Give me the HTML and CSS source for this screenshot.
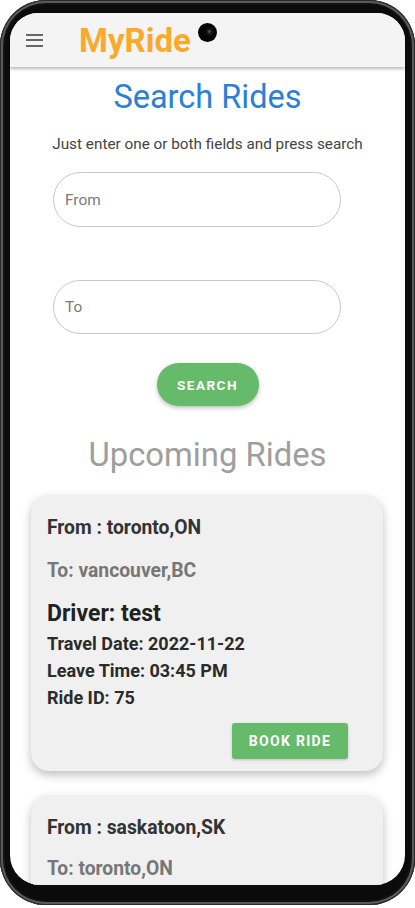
FILE: index.html
```html
<!DOCTYPE html>
<html>
<head>
<meta charset="utf-8">
<link rel="stylesheet" href="styles.css">
</head>
<body>
<div class="phone">
  <div class="screen">
    <header class="appbar">
      <span class="menu"><i></i><i></i><i></i></span>
      <span class="brand">MyRide</span>
    </header>
    <h1 class="title">Search Rides</h1>
    <p class="hint">Just enter one or both fields and press search</p>
    <div class="field from"><span class="ph">From</span></div>
    <div class="field to"><span class="ph">To</span></div>
    <button class="search">SEARCH</button>
    <h2 class="upcoming">Upcoming Rides</h2>
    <div class="card">
      <div class="l-from">From : toronto,ON</div>
      <div class="l-to">To: vancouver,BC</div>
      <div class="l-driver">Driver: test</div>
      <div class="l-info first">Travel Date: 2022-11-22</div>
      <div class="l-info">Leave Time: 03:45 PM</div>
      <div class="l-info">Ride ID: 75</div>
      <div class="actions"><button class="book">BOOK RIDE</button></div>
    </div>
    <div class="card second">
      <div class="l-from">From : saskatoon,SK</div>
      <div class="l-to">To: toronto,ON</div>
    </div>
  </div>
  <div class="camera"></div>
</div>
</body>
</html>
```
FILE: styles.css
```css
* { box-sizing: border-box; }
html, body { margin: 0; padding: 0; background: #fff; }
body { width: 415px; height: 908px; overflow: hidden; font-family: Roboto, "Noto Sans", sans-serif; }

.phone {
  position: relative;
  width: 415px;
  height: 905px;
  border-radius: 46px;
  background: #0b0b0b;
  box-shadow: inset 0 0 0 1px #2a2a2a, inset 0 0 0 3px #5a5a5a, inset 0 0 0 5px #111;
  padding: 13px 10px 0 10px;
}

.screen {
  height: 872px;
  border-radius: 28px 28px 30px 30px;
  background: #fff;
  overflow: hidden;
  display: flex;
  flex-direction: column;
}

.appbar {
  flex: none;
  height: 54px;
  background: #f4f4f4;
  box-shadow: 0 2px 3px rgba(0,0,0,0.28);
  display: flex;
  align-items: center;
  padding-left: 16px;
  position: relative;
  z-index: 1;
}
.menu { display: flex; flex-direction: column; gap: 3.5px; width: 17px; }
.menu i { display: block; height: 2px; background: #666; }
.brand {
  margin-left: 36px;
  font-size: 33px;
  line-height: 37px;
  font-weight: 700;
  color: #f9a92c;
}

.camera {
  position: absolute;
  z-index: 5;
  left: 198px;
  top: 23px;
  width: 19px;
  height: 19px;
  border-radius: 50%;
  background: radial-gradient(circle at 60% 45%, #6a5a7a 0, #1a1a24 2px, #050505 5px);
}

.title {
  margin: 11px 0 0;
  font-size: 32.5px;
  line-height: 38px;
  font-weight: 400;
  color: #2a80d6;
  text-align: center;
}
.hint {
  margin: 18px 0 0;
  font-size: 15.3px;
  line-height: 20px;
  color: #444;
  text-align: center;
}

.field {
  flex: none;
  margin-left: 43px;
  width: 288px;
  border: 1px solid #c8c8c8;
  border-radius: 28px;
  display: flex;
  align-items: center;
  padding-left: 11px;
}
.field.from { margin-top: 18px; height: 55px; }
.field.to { margin-top: 53px; height: 54px; }
.ph { font-size: 15.4px; color: #7a7a7a; }

.search {
  flex: none;
  align-self: center;
  margin-top: 29px;
  width: 102px;
  height: 43px;
  border: none;
  border-radius: 22px;
  background: #66bb6a;
  color: #fff;
  font-family: Roboto, sans-serif;
  font-weight: 700;
  font-size: 13.5px;
  letter-spacing: 1.5px;
  box-shadow: 0 2px 4px rgba(0,0,0,0.25);
  padding: 0;
}

.upcoming {
  margin: 30px 0 0;
  font-size: 32.8px;
  line-height: 38px;
  font-weight: 400;
  color: #9e9e9e;
  text-align: center;
}

.card {
  flex: none;
  margin: 21px 0 0 21px;
  width: 352px;
  height: 276px;
  background: #f0f0f0;
  border-radius: 18px;
  box-shadow: 0 4px 10px rgba(0,0,0,0.25);
  padding: 21px 16px 11px;
  display: flex;
  flex-direction: column;
}
.card.second { margin-top: 24px; height: 120px; }
.card.second .l-to { margin-top: 17px; }

.l-from { font-size: 19.3px; line-height: 24px; font-weight: 700; color: #333; }
.l-to { margin-top: 19px; font-size: 19.3px; line-height: 24px; font-weight: 700; color: #777; }
.l-driver { margin-top: 17px; font-size: 23px; line-height: 28px; font-weight: 700; color: #222; }
.l-info { margin-top: 3px; font-size: 18px; line-height: 24px; font-weight: 700; color: #2b2b2b; }
.l-info.first { margin-top: 4px; }

.actions { margin-top: 13px; display: flex; justify-content: flex-end; padding-right: 19px; }
.book {
  width: 116px;
  height: 36px;
  border: none;
  border-radius: 3px;
  background: #66bb6a;
  color: #fff;
  font-family: Roboto, sans-serif;
  font-weight: 700;
  font-size: 14px;
  letter-spacing: 1.3px;
  box-shadow: 0 1px 3px rgba(0,0,0,0.2);
  padding: 0;
}
```
